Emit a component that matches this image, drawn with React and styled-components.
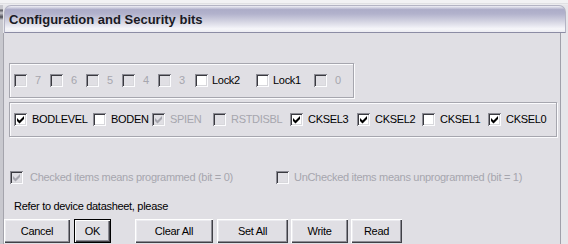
import styled, { createGlobalStyle } from 'styled-components'

const GlobalStyle = createGlobalStyle`
    html, body {
        margin:0;
        padding:0;
    }
    body {
        width:568px;
        height:244px;
        overflow:hidden;
        background:#e6e6ea;
        font-family:"Liberation Sans", Arial, sans-serif;
        font-size:11px;
    }
`

const Screen = styled.div`
    width:568px;
    height:244px;
    display:flex;
    flex-direction:column;
    background:#e6e6ea;
`
const TopStrip = styled.div`
    height:5px;
    background:linear-gradient(#f2f2f4 0, #f2f2f4 55%, #c8c8cc 60%, #ececef 75%);
`
const Frame = styled.div`
    flex:1;
    display:flex;
`
const LeftEdge = styled.div`
    width:3px;
    background:linear-gradient(#c8c8ce 0, #c8c8ce 4px, #55555c 5px, #c8c8ce 8px, #4c4c54 12px, #c8c8ce 15px, #c8c8ce 100%);
`
const Window = styled.div`
    flex:1;
    display:flex;
    flex-direction:column;
`
const TitleBar = styled.div`
    height:28px;
    margin:0 2px 0 1px;
    border:1px solid #b4b4c4;
    border-bottom:1px solid #8c8ca4;
    border-radius:7px 7px 0 0;
    background:linear-gradient(#f0f0f6 0, #acacc8 14%, #b2b2cc 30%, #d4d4e2 60%, #f6f6fa 88%, #ececf2 100%);
    display:flex;
    align-items:center;
    padding-left:4px;
    box-sizing:border-box;
`
const Title = styled.span`
    font-weight:bold;
    font-size:13px;
    color:#1a1a24;
    margin-top:1px;
`
const Body = styled.div`
    width:558px;
    box-sizing:border-box;
    flex:1;
    background:#e0dfe4;
    border-left:1px solid #a4a4ac;
    border-right:1px solid #a0a0aa;
    display:flex;
    flex-direction:column;
    padding-top:30px;
`
const GroupBox = styled.div`
    width:${p => p.$w}px;
    height:35px;
    box-sizing:border-box;
    margin:${p => p.$mt || 0}px 0 0 5px;
    border:1px solid #a6a6ae;
    box-shadow:inset 1px 1px 0 #fbfbfd, 1px 1px 0 #fbfbfd;
    display:flex;
    align-items:center;
    padding:0 4px;
`
const Slot = styled.label`
    display:flex;
    align-items:center;
    flex:0 0 auto;
    width:${p => (p.$w ? p.$w + 'px' : 'auto')};
`
const Box = styled.span`
    width:13px;
    height:13px;
    flex:0 0 13px;
    box-sizing:border-box;
    background:${p => (p.$disabled ? '#e0dfe4' : '#ffffff')};
    box-shadow:inset 1px 1px 0 #8c8c94, inset -1px -1px 0 #fcfcfe, inset 2px 2px 0 #3a3a40, inset -2px -2px 0 #d8d8dc;
    display:block;
`
const Label = styled.span`
    margin-left:${p => p.$gap || 5}px;
    letter-spacing:-0.3px;
    color:${p => (p.$disabled ? '#a6a6ae' : '#000')};
    white-space:nowrap;
    line-height:13px;
`
const Note = styled.div`
    margin:${p => p.$mt}px 0 0 ${p => p.$ml}px;
    display:flex;
    align-items:center;
    height:14px;
`
const ButtonRow = styled.div`
    display:flex;
    margin-top:6px;
`
const Button = styled.button`
    width:${p => p.$w}px;
    height:24px;
    margin-left:${p => p.$ml || 0}px;
    padding:0;
    box-sizing:border-box;
    border:${p => (p.$def ? '1px solid #000' : 'none')};
    background:#e0dfe4;
    box-shadow:${p => (p.$def
        ? 'inset 1px 1px 0 #fff, inset -1px -1px 0 #404046, inset -2px -2px 0 #8c8c94'
        : 'inset 1px 1px 0 #fff, inset -1px -1px 0 #404046, inset -2px -2px 0 #8c8c94, inset 2px 2px 0 #ececf0')};
    font-family:"Liberation Sans", Arial, sans-serif;
    font-size:11px;
    letter-spacing:-0.3px;
    color:#000;
`

const Check = ({ checked, disabled, w, gap, children }) => (
    <Slot $w={w}>
        <Box $disabled={disabled}>
            {checked && (
                <svg width="13" height="13" viewBox="0 0 13 13">
                    <polygon points="3,5 5.5,7.5 10,3 10,6 5.5,10.5 3,8" fill={disabled ? '#a6a6ae' : '#000'} />
                </svg>
            )}
        </Box>
        {children && <Label $disabled={disabled} $gap={gap}>{children}</Label>}
    </Slot>
)

const lockBits = [
    { t: '7', w: 36, d: true },
    { t: '6', w: 36, d: true },
    { t: '5', w: 36, d: true },
    { t: '4', w: 36, d: true },
    { t: '3', w: 37, d: true },
    { t: 'Lock2', w: 61 },
    { t: 'Lock1', w: 58 },
    { t: '0', d: true },
]

const fuseBits = [
    { t: 'BODLEVEL', w: 79, c: true },
    { t: 'BODEN', w: 59 },
    { t: 'SPIEN', w: 61, c: true, d: true },
    { t: 'RSTDISBL', w: 77, d: true },
    { t: 'CKSEL3', w: 67, c: true },
    { t: 'CKSEL2', w: 65, c: true },
    { t: 'CKSEL1', w: 66 },
    { t: 'CKSEL0', c: true },
]

const App = () => {
    return (
        <>
            <GlobalStyle />
            <Screen>
                <TopStrip />
                <Frame>
                    <LeftEdge />
                    <Window>
                        <TitleBar>
                            <Title>Configuration and Security bits</Title>
                        </TitleBar>
                        <Body>
                            <GroupBox $w={345}>
                                {lockBits.map(b => (
                                    <Check key={b.t} w={b.w} disabled={b.d} gap={b.d ? 8 : 4}>{b.t}</Check>
                                ))}
                            </GroupBox>
                            <GroupBox $w={548} $mt={4}>
                                {fuseBits.map(b => (
                                    <Check key={b.t} w={b.w} checked={b.c} disabled={b.d}>{b.t}</Check>
                                ))}
                            </GroupBox>
                            <Note $mt={33} $ml={6}>
                                <Check checked disabled w={266} gap={7}>Checked items means programmed (bit = 0)</Check>
                                <Check disabled gap={5}>UnChecked items means unprogrammed (bit = 1)</Check>
                            </Note>
                            <Note $mt={15} $ml={5}>
                                <Label>Refer to device datasheet, please</Label>
                            </Note>
                            <ButtonRow>
                                <Button $w={66}>Cancel</Button>
                                <Button $w={37} $ml={4} $def>OK</Button>
                                <Button $w={78} $ml={24}>Clear All</Button>
                                <Button $w={71} $ml={4}>Set All</Button>
                                <Button $w={57} $ml={3}>Write</Button>
                                <Button $w={51} $ml={3}>Read</Button>
                            </ButtonRow>
                        </Body>
                    </Window>
                </Frame>
            </Screen>
        </>
    )
}

export default App
